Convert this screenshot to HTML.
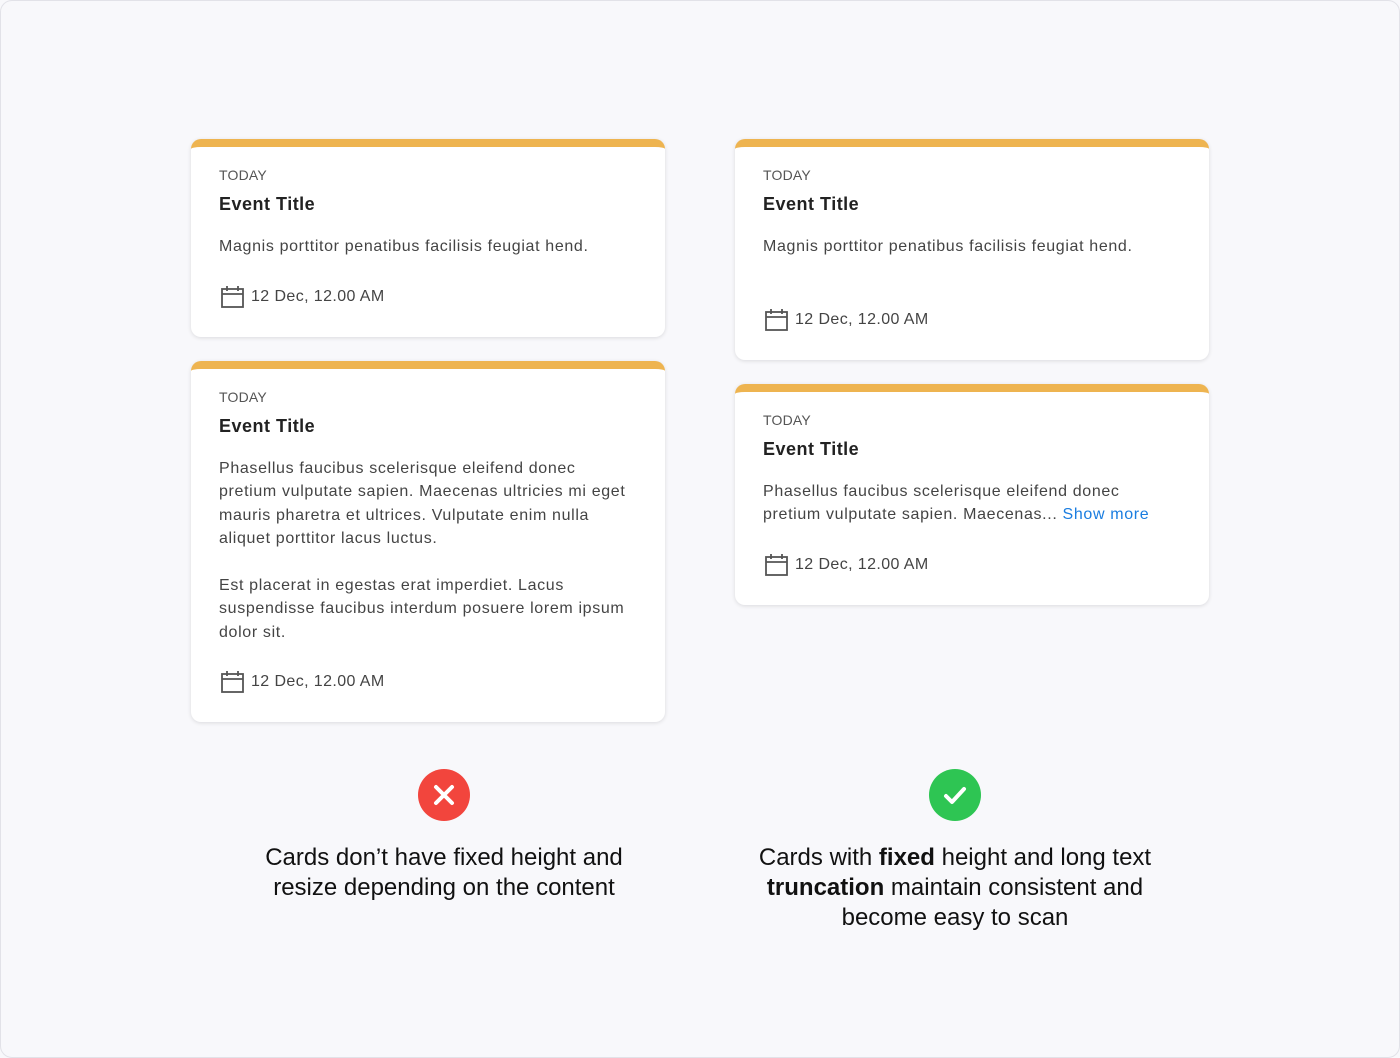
<!DOCTYPE html>
<html><head><style>
*{margin:0;padding:0;box-sizing:border-box}
body{width:1400px;height:1058px;background:#f8f8fb;font-family:"Liberation Sans",sans-serif;position:relative;overflow:hidden}
.frame{position:absolute;left:0;top:0;width:1400px;height:1058px;border:1px solid #e2e2e8;border-radius:12px}
.card{position:absolute;width:474px;background:#fff;border-radius:10px;border-top:8px solid #eeb450;box-shadow:0 1px 4px rgba(0,0,0,.12)}
.t{position:absolute;left:28px;white-space:nowrap;color:#4a4a4a}
.today{font-size:14px;color:#555;letter-spacing:0.2px}
.title{font-size:18px;font-weight:bold;color:#222;letter-spacing:0.5px}
.body{font-size:16px;line-height:23.4px;color:#444;letter-spacing:0.65px}
.date{font-size:16px;color:#444;display:flex;align-items:center;gap:7px;letter-spacing:0.4px}
.cap{position:absolute;font-size:24px;color:#111;text-align:center;line-height:30px;letter-spacing:0px}
</style></head><body>
<div class="frame"></div>
<div class="card" style="left:191px;top:139px;height:198px">
<div class="t today" style="top:20px">TODAY</div>
<div class="t title" style="top:47px">Event Title</div>
<div class="t body" style="top:88px">Magnis porttitor penatibus facilisis feugiat hend.</div>
<div class="t date" style="top:139px;left:30px"><svg width="23" height="22" viewBox="0 0 23 22"><rect x="1" y="3" width="21" height="18" fill="none" stroke="#555" stroke-width="1.8"/><line x1="1" y1="8" x2="22" y2="8" stroke="#555" stroke-width="1.8"/><line x1="6" y1="0" x2="6" y2="5" stroke="#555" stroke-width="1.8"/><line x1="17" y1="0" x2="17" y2="5" stroke="#555" stroke-width="1.8"/></svg>12 Dec, 12.00 AM</div>
</div>
<div class="card" style="left:191px;top:361px;height:361px">
<div class="t today" style="top:20px">TODAY</div>
<div class="t title" style="top:47px">Event Title</div>
<div class="t body" style="top:88px">Phasellus faucibus scelerisque eleifend donec<br>pretium vulputate sapien. Maecenas ultricies mi eget<br>mauris pharetra et ultrices. Vulputate enim nulla<br>aliquet porttitor lacus luctus.<br><br>Est placerat in egestas erat imperdiet. Lacus<br>suspendisse faucibus interdum posuere lorem ipsum<br>dolor sit.</div>
<div class="t date" style="top:302px;left:30px"><svg width="23" height="22" viewBox="0 0 23 22"><rect x="1" y="3" width="21" height="18" fill="none" stroke="#555" stroke-width="1.8"/><line x1="1" y1="8" x2="22" y2="8" stroke="#555" stroke-width="1.8"/><line x1="6" y1="0" x2="6" y2="5" stroke="#555" stroke-width="1.8"/><line x1="17" y1="0" x2="17" y2="5" stroke="#555" stroke-width="1.8"/></svg>12 Dec, 12.00 AM</div>
</div>
<div class="card" style="left:735px;top:139px;height:221px">
<div class="t today" style="top:20px">TODAY</div>
<div class="t title" style="top:47px">Event Title</div>
<div class="t body" style="top:88px">Magnis porttitor penatibus facilisis feugiat hend.</div>
<div class="t date" style="top:162px;left:30px"><svg width="23" height="22" viewBox="0 0 23 22"><rect x="1" y="3" width="21" height="18" fill="none" stroke="#555" stroke-width="1.8"/><line x1="1" y1="8" x2="22" y2="8" stroke="#555" stroke-width="1.8"/><line x1="6" y1="0" x2="6" y2="5" stroke="#555" stroke-width="1.8"/><line x1="17" y1="0" x2="17" y2="5" stroke="#555" stroke-width="1.8"/></svg>12 Dec, 12.00 AM</div>
</div>
<div class="card" style="left:735px;top:384px;height:221px">
<div class="t today" style="top:20px">TODAY</div>
<div class="t title" style="top:47px">Event Title</div>
<div class="t body" style="top:88px">Phasellus faucibus scelerisque eleifend donec<br>pretium vulputate sapien. Maecenas... <span style="color:#1a7de0">Show more</span></div>
<div class="t date" style="top:162px;left:30px"><svg width="23" height="22" viewBox="0 0 23 22"><rect x="1" y="3" width="21" height="18" fill="none" stroke="#555" stroke-width="1.8"/><line x1="1" y1="8" x2="22" y2="8" stroke="#555" stroke-width="1.8"/><line x1="6" y1="0" x2="6" y2="5" stroke="#555" stroke-width="1.8"/><line x1="17" y1="0" x2="17" y2="5" stroke="#555" stroke-width="1.8"/></svg>12 Dec, 12.00 AM</div>
</div>
<svg style="position:absolute;left:418px;top:769px" width="52" height="52" viewBox="0 0 52 52"><circle cx="26" cy="26" r="26" fill="#f2453d"/><path d="M18 18L34 34M34 18L18 34" stroke="#fff" stroke-width="4" stroke-linecap="round"/></svg>
<svg style="position:absolute;left:929px;top:769px" width="52" height="52" viewBox="0 0 52 52"><circle cx="26" cy="26" r="26" fill="#2ec553"/><path d="M17 27L23 33L35 20" fill="none" stroke="#fff" stroke-width="4" stroke-linecap="round" stroke-linejoin="round"/></svg>
<div class="cap" style="left:194px;width:500px;top:843px">Cards don’t have fixed height and<br>resize depending on the content</div>
<div class="cap" style="left:705px;width:500px;top:843px">Cards with <b>fixed</b> height and long text<br><b>truncation</b> maintain consistent and<br>become easy to scan</div>
</body></html>
